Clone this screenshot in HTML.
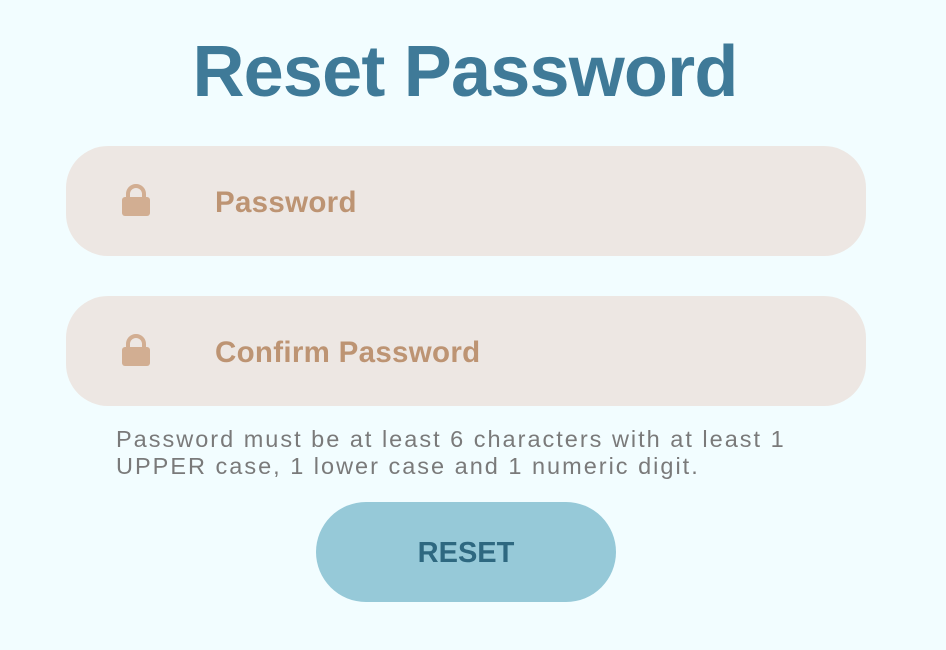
<!DOCTYPE html>
<html><head><style>
body{margin:0;width:946px;height:650px;background:#f2fdff;font-family:"Liberation Sans",sans-serif;position:relative;overflow:hidden}
h1{position:absolute;top:27px;left:0;width:930px;text-align:center;margin:0;font-size:72px;font-weight:bold;color:#3f7a98;line-height:90px;letter-spacing:-0.8px}
.in{position:absolute;left:66px;width:800px;height:110px;border-radius:42px;background:#ede7e3}
.in span{position:absolute;left:149px;top:0;line-height:114px;font-size:29.5px;font-weight:bold;color:#bd9473;letter-spacing:0.3px}
.in svg{position:absolute;left:55px;top:37px}
.help{position:absolute;left:116px;top:426px;font-size:23.5px;line-height:27px;color:#7a7a7a;letter-spacing:2px;white-space:nowrap}
.btn{position:absolute;left:316px;top:502px;width:300px;height:100px;border-radius:50px;background:#96c9d8;color:#2e6880;font-weight:bold;font-size:29px;text-align:center;line-height:102px}
</style></head><body>
<h1>Reset Password</h1>
<div class="in" style="top:146px"><svg width="30" height="34" viewBox="0 0 30 34"><path d="M7 15V11a8 8 0 0 1 16 0v4" fill="none" stroke="#d2ae92" stroke-width="4"/><rect x="1" y="14" width="28" height="19" rx="3" fill="#d2ae92"/></svg><span>Password</span></div>
<div class="in" style="top:296px"><svg width="30" height="34" viewBox="0 0 30 34"><path d="M7 15V11a8 8 0 0 1 16 0v4" fill="none" stroke="#d2ae92" stroke-width="4"/><rect x="1" y="14" width="28" height="19" rx="3" fill="#d2ae92"/></svg><span>Confirm Password</span></div>
<div class="help">Password must be at least 6 characters with at least 1<br>UPPER case, 1 lower case and 1 numeric digit.</div>
<div class="btn">RESET</div>
</body></html>
